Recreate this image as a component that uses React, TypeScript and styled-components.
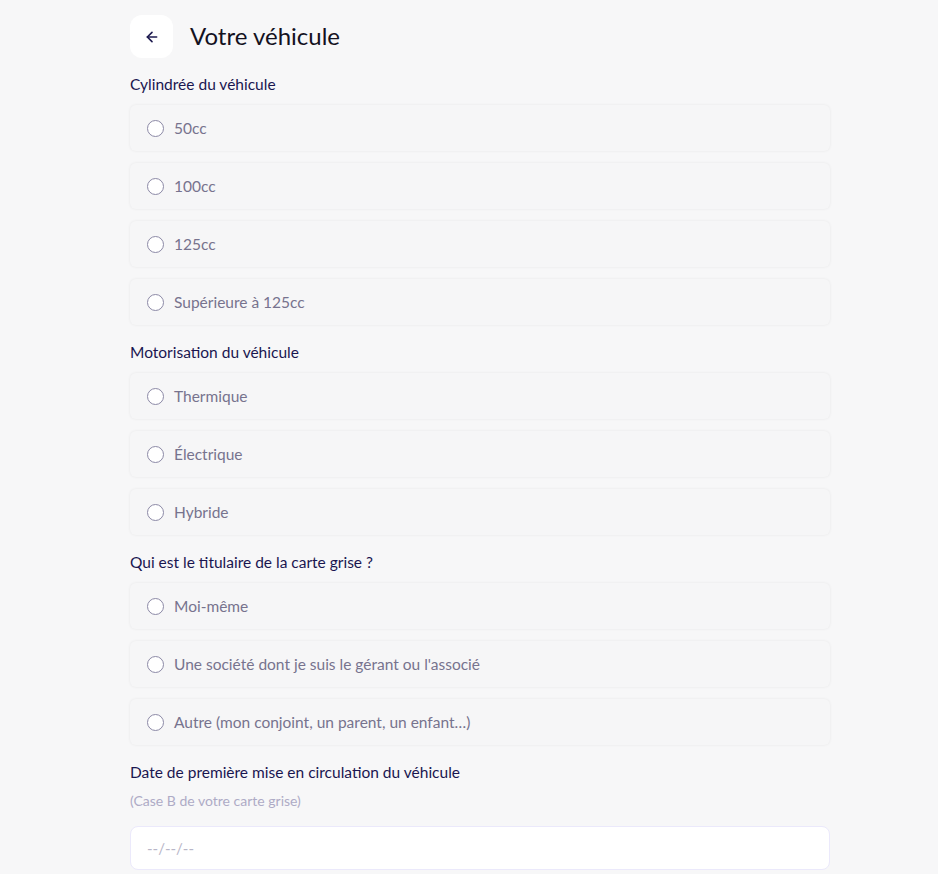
import React from 'react';
import styled, { createGlobalStyle } from 'styled-components';

const GlobalStyle = createGlobalStyle`
  body {
    margin: 0;
    background: #f7f7f8;
    font-family: Lato, "Noto Sans", sans-serif;
  }
`;

const sections = [
  {
    title: 'Cylindrée du véhicule',
    options: ['50cc', '100cc', '125cc', 'Supérieure à 125cc'],
  },
  {
    title: 'Motorisation du véhicule',
    options: ['Thermique', 'Électrique', 'Hybride'],
  },
  {
    title: 'Qui est le titulaire de la carte grise ?',
    options: [
      'Moi-même',
      "Une société dont je suis le gérant ou l'associé",
      'Autre (mon conjoint, un parent, un enfant…)',
    ],
  },
];

const App: React.FC = (): JSX.Element => {
  return (
    <Page>
      <GlobalStyle />
      <Header>
        <BackButton aria-label="Retour">
          <svg width="16" height="16" viewBox="0 0 24 24" fill="none" stroke="#1d1a4f" strokeWidth="2.4" strokeLinecap="round" strokeLinejoin="round">
            <path d="M19 12H5" />
            <path d="M12 19l-7-7 7-7" />
          </svg>
        </BackButton>
        <Title>Votre véhicule</Title>
      </Header>

      {sections.map((section) => (
        <Section key={section.title}>
          <Label>{section.title}</Label>
          <Options>
            {section.options.map((opt) => (
              <Option key={opt}>
                <Radio />
                <OptionText>{opt}</OptionText>
              </Option>
            ))}
          </Options>
        </Section>
      ))}

      <Section>
        <Label>Date de première mise en circulation du véhicule</Label>
        <Hint>(Case B de votre carte grise)</Hint>
        <DateInput placeholder="--/--/--" />
      </Section>
    </Page>
  );
};

const Page = styled.div`
  width: 700px;
  margin: 0 0 0 130px;
  padding: 15px 0 40px;
  display: flex;
  flex-direction: column;
`;

const Header = styled.div`
  display: flex;
  align-items: center;
  gap: 17px;
  margin-bottom: 16px;
`;

const BackButton = styled.button`
  width: 43px;
  height: 43px;
  border: none;
  border-radius: 12px;
  background: #ffffff;
  display: flex;
  align-items: center;
  justify-content: center;
  padding: 0;
  cursor: pointer;
`;

const Title = styled.h1`
  margin: 0 0 2px;
  font-size: 24px;
  font-weight: 400;
  color: #14121f;
`;

const Section = styled.div`
  display: flex;
  flex-direction: column;
  margin-bottom: 17px;
`;

const Label = styled.div`
  font-size: 15.5px;
  color: #1a1650;
  line-height: 20px;
  margin-bottom: 11px;
`;

const Hint = styled.div`
  font-size: 14px;
  color: #aeabc6;
  margin-top: -1px;
  margin-bottom: 17px;
`;

const Options = styled.div`
  display: flex;
  flex-direction: column;
  gap: 12px;
`;

const Option = styled.label`
  height: 46px;
  box-sizing: border-box;
  display: flex;
  align-items: center;
  gap: 10px;
  padding: 0 17px;
  background: #f6f6f7;
  border-radius: 6px;
  box-shadow: 0 0 3px rgba(0, 0, 0, 0.07);
  cursor: pointer;
`;

const Radio = styled.span`
  width: 15px;
  height: 15px;
  border: 1px solid #8c89a6;
  border-radius: 50%;
  background: #ffffff;
  flex-shrink: 0;
`;

const OptionText = styled.span`
  font-size: 15.5px;
  color: #77738e;
`;

const DateInput = styled.input`
  height: 44px;
  box-sizing: border-box;
  border: 1px solid #ebe9fb;
  border-radius: 8px;
  background: #ffffff;
  padding: 0 16px;
  font-family: inherit;
  font-size: 15px;
  color: #333;
  outline: none;

  &::placeholder {
    color: #b8b6c8;
  }
`;

export default App;
